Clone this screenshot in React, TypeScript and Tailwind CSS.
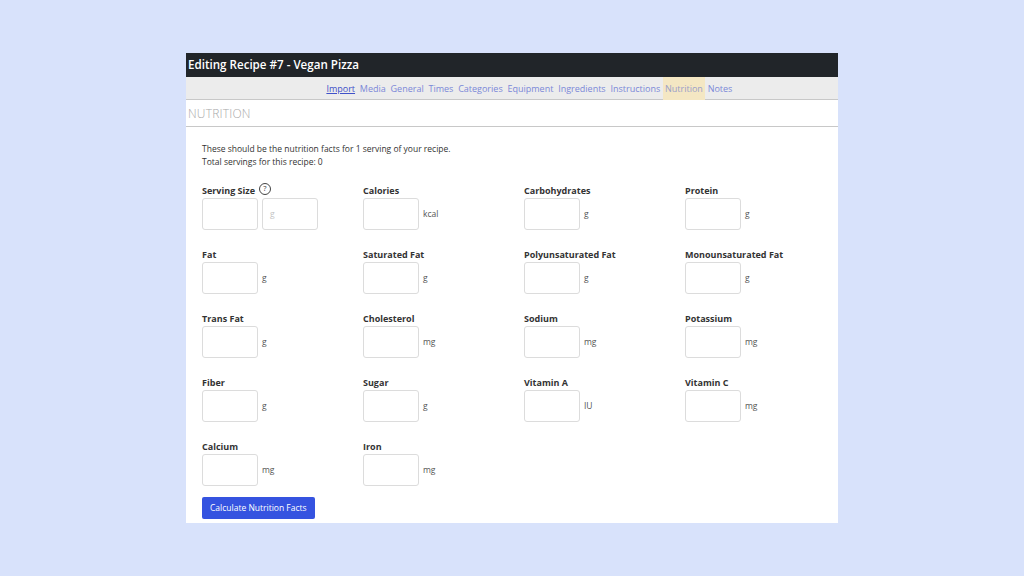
import React from "react";

type Field = { label: string; unit: string; help?: boolean; double?: boolean };

const FIELDS: Field[] = [
  { label: "Serving Size", unit: "g", help: true, double: true },
  { label: "Calories", unit: "kcal" },
  { label: "Carbohydrates", unit: "g" },
  { label: "Protein", unit: "g" },
  { label: "Fat", unit: "g" },
  { label: "Saturated Fat", unit: "g" },
  { label: "Polyunsaturated Fat", unit: "g" },
  { label: "Monounsaturated Fat", unit: "g" },
  { label: "Trans Fat", unit: "g" },
  { label: "Cholesterol", unit: "mg" },
  { label: "Sodium", unit: "mg" },
  { label: "Potassium", unit: "mg" },
  { label: "Fiber", unit: "g" },
  { label: "Sugar", unit: "g" },
  { label: "Vitamin A", unit: "IU" },
  { label: "Vitamin C", unit: "mg" },
  { label: "Calcium", unit: "mg" },
  { label: "Iron", unit: "mg" },
];

const TABS = [
  "Import",
  "Media",
  "General",
  "Times",
  "Categories",
  "Equipment",
  "Ingredients",
  "Instructions",
  "Nutrition",
  "Notes",
];

function Box() {
  return <div className="h-[32px] w-[56px] rounded-[3px] border border-[#dcdcdc] bg-white" />;
}

export default function App() {
  return (
    <div
      className="h-[576px] w-full bg-[#d8e2fb] pt-[53px]"
      style={{ fontFamily: '"Open Sans", "Noto Sans", sans-serif' }}
    >
      <div className="mx-auto w-[652px] bg-white">
        {/* Title bar */}
        <div className="flex h-[24px] items-center bg-[#212529] px-[2px] text-[11.6px] font-semibold text-white">
          Editing Recipe #7 - Vegan Pizza
        </div>

        {/* Tabs */}
        <div className="flex h-[23px] items-center border-b border-[#c8c8c8] bg-[#ececec] pl-[138px] text-[9px] text-[#7b88d8]">
          {TABS.map((t) => (
            <span
              key={t}
              className={[
                "px-[2.4px] leading-[23px]",
                t === "Import" ? "text-[#3f51c9] underline" : "",
                t === "Nutrition" ? "bg-[#f4e7c3] text-[#9aa0c8]" : "",
              ].join(" ")}
            >
              {t}
            </span>
          ))}
        </div>

        {/* Section heading */}
        <div className="flex h-[27px] items-center border-b border-[#c8c8c8] px-[2px] pt-[2px] text-[12px] font-light uppercase tracking-[0.2px] text-[#a9a9a9]">
          Nutrition
        </div>

        <div className="px-[16px] pb-[4px] pt-[15px]">
          <p className="text-[8.5px] leading-[13px] text-[#333]">
            These should be the nutrition facts for 1 serving of your recipe.
            <br />
            Total servings for this recipe: 0
          </p>

          <div className="mt-[16px] grid w-[644px] grid-cols-[161px_161px_161px_161px]">
            {FIELDS.map((f) => (
              <div key={f.label} className="mb-[18px] flex flex-col">
                <div className="flex h-[14px] items-start gap-[4px] text-[9px] font-bold text-[#333]">
                  {f.label}
                  {f.help && (
                    <span className="mt-[-1px] flex h-[12px] w-[12px] items-center justify-center rounded-full border border-[#444] text-[7.5px] font-normal leading-none">
                      ?
                    </span>
                  )}
                </div>
                <div className="flex items-center gap-[4px]">
                  <Box />
                  {f.double ? (
                    <div className="flex h-[32px] w-[56px] items-center rounded-[3px] border border-[#dcdcdc] bg-white pl-[7px] text-[8.5px] text-[#c4c4c4]">
                      g
                    </div>
                  ) : (
                    <span className="text-[8.5px] text-[#555]">{f.unit}</span>
                  )}
                </div>
              </div>
            ))}
          </div>

          <div className="-mt-[7px]">
            <button
              type="button"
              className="block h-[22px] rounded-[2px] bg-[#3553e0] px-[8px] text-[8.5px] text-white"
            >
              Calculate Nutrition Facts
            </button>
          </div>
        </div>
      </div>
    </div>
  );
}
